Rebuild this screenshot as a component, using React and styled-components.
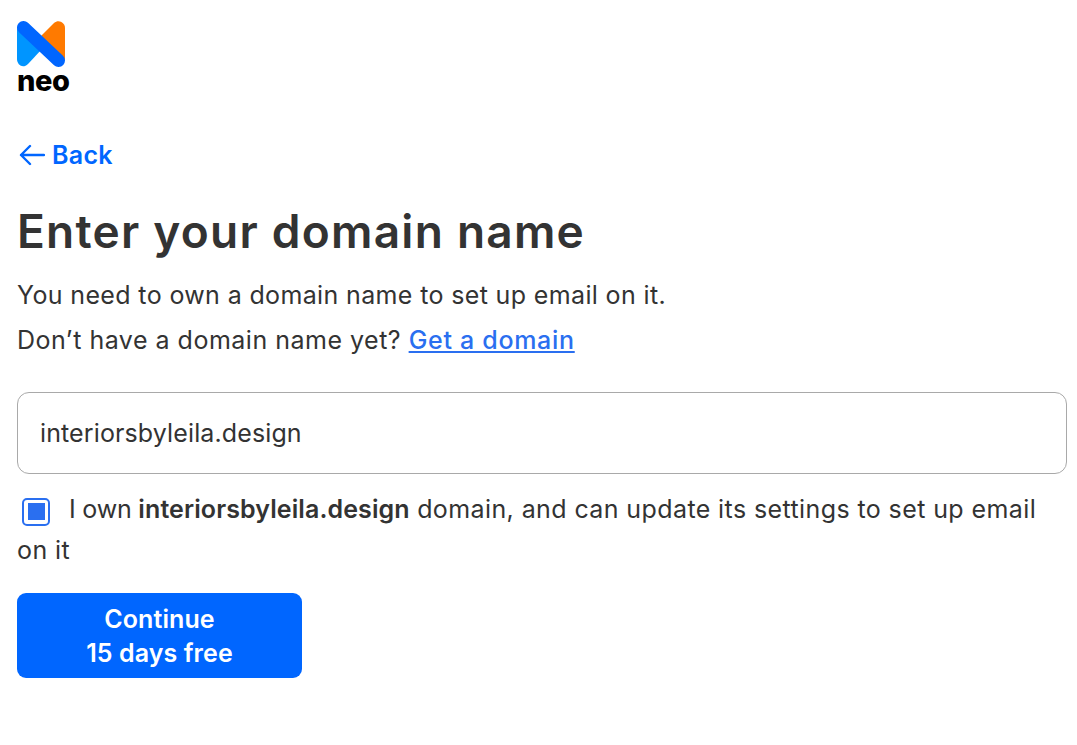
import React from "react";
import styled, { createGlobalStyle } from "styled-components";

const Global = createGlobalStyle`
  html, body { margin: 0; padding: 0; background: #fff; }
  * { box-sizing: border-box; }
  body { font-family: Inter, "Open Sans", sans-serif; color: #333; }
`;
const Page = styled.main`
  width: 1077px; height: 745px; padding: 21px 10px 0 17px; display: flex; flex-direction: column; overflow: hidden;
`;
const Brand = styled.div`
  display: flex; flex-direction: column; align-items: flex-start; height: 82px;
`;
const BrandName = styled.span`
  font-size: 29px; font-weight: 800; line-height: 30px; color: #000; letter-spacing: -0.4px; margin-top: -1px;
`;
const BackLink = styled.a`
  display: flex; align-items: center; gap: 7px; margin: 37px 0 0 2px; height: 30px;
  font-size: 25px; font-weight: 600; color: #0066ff; letter-spacing: 0.3px;
`;
const Title = styled.h1`
  margin: 30px 0 0; font-size: 46px; line-height: 62px; font-weight: 600; color: #333; letter-spacing: 1.25px;
`;
const Para = styled.p`
  margin: ${p => p.$top}px 0 0; font-size: 25px; line-height: 34px; font-weight: 400; color: #333; letter-spacing: ${p => p.$spacing}px;
`;
const DomainLink = styled.a`
  color: #2a6ff0; text-decoration: underline; font-weight: 500; letter-spacing: 0.7px;
`;
const DomainInput = styled.input`
  width: 1050px; height: 82px; margin-top: 35px; padding: 0 22px; border: 1px solid #a9a9a9; border-radius: 12px;
  font: 400 25px Inter, sans-serif; color: #333; background: #fff; outline: none; letter-spacing: 0.12px;
`;
const Consent = styled.p`
  margin: 15px 0 0; font-size: 25px; line-height: 41px; color: #333; letter-spacing: 0.4px;
`;
const Box = styled.span`
  display: inline-flex; align-items: center; justify-content: center; vertical-align: -2px;
  width: 28px; height: 28px; margin: 0 19px 0 5px; border: 2px solid #2a6ff0; border-radius: 5px; background: #fff;
`;
const BoxFill = styled.span`
  display: block; width: 17px; height: 17px; background: #2a6ff0;
`;
const Lead = styled.span`
  letter-spacing: -0.2px;
`;
const Strong = styled.strong`
  font-weight: 600; letter-spacing: 0.1px;
`;
const Cta = styled.button`
  width: 285px; height: 85px; margin-top: 22px; border: 0; border-radius: 9px; background: #0066ff; color: #fff;
  font: 600 25px/34px Inter, sans-serif; text-align: center; padding: 0; letter-spacing: 0.1px;
`;

const Logo = () => (
  <svg width="48" height="46" viewBox="0 0 48 46" aria-hidden="true">
    <path d="M0 9 C0 2 6 -1 11 3 L25 18 L25 28 L11 43 C6 48 0 44 0 38 Z" fill="#0095ff" />
    <path d="M48 7 C48 2 42 -2 37 2 L24 15 L24 24 L44 42 C46 42 48 40 48 37 Z" fill="#ff7a00" />
    <path d="M6.5 6.5 L41.5 39.5" stroke="#0066ff" strokeWidth="13" strokeLinecap="round" fill="none" />
  </svg>
);
const Arrow = () => (
  <svg width="26" height="22" viewBox="0 0 26 22" fill="none" stroke="#0066ff" strokeWidth="2.4" strokeLinecap="round" strokeLinejoin="round" aria-hidden="true">
    <path d="M25 11 H2 M11 2 L2 11 L11 20" />
  </svg>
);

export default function App() {
  return (
    <Page>
      <Global />
      <Brand>
        <Logo />
        <BrandName>neo</BrandName>
      </Brand>
      <BackLink><Arrow />Back</BackLink>
      <Title>Enter your domain name</Title>
      <Para $top={16} $spacing={0.36}>You need to own a domain name to set up email on it.</Para>
      <Para $top={11} $spacing={0.5}>Don’t have a domain name yet? <DomainLink>Get a domain</DomainLink></Para>
      <DomainInput readOnly value="interiorsbyleila.design" />
      <Consent>
        <Box><BoxFill /></Box><Lead>I own </Lead><Strong>interiorsbyleila.design</Strong> domain, and can update its settings to set up email on it
      </Consent>
      <Cta>Continue<br />15 days free</Cta>
    </Page>
  );
}
